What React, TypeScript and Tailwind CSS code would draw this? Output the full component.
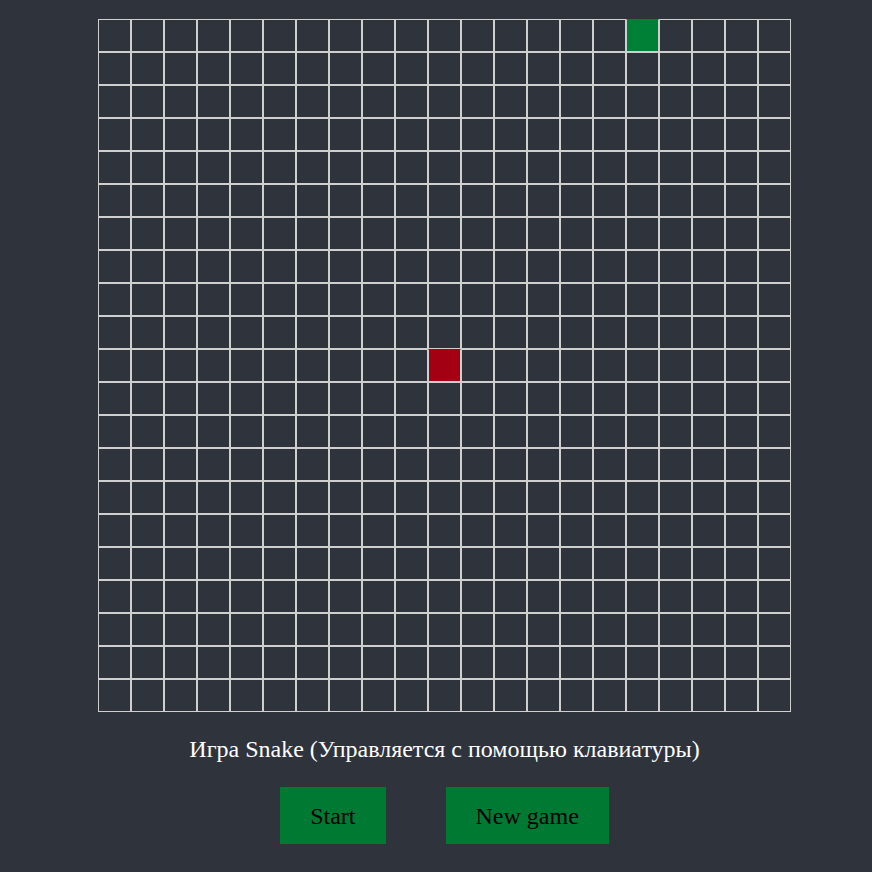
const SIZE = 21;
const snake = [{ x: 16, y: 0 }];
const food = { x: 10, y: 10 };

function Cell({ x, y }: { x: number; y: number }) {
  const isSnake = snake.some((s) => s.x === x && s.y === y);
  const isFood = food.x === x && food.y === y;

  let cls = "w-[33px] h-[33px] border border-[#cfcfcf]";
  if (isSnake) cls += " bg-[#007f36] border-t-[#007f36]";
  if (isFood) cls += " bg-[#a30014] border-t-[#a30014]";

  return <div className={cls} />;
}

export default function App() {
  const cells = [];
  for (let y = 0; y < SIZE; y++) {
    for (let x = 0; x < SIZE; x++) {
      cells.push(<Cell key={`${x}-${y}`} x={x} y={y} />);
    }
  }

  return (
    <div className="min-h-[872px] bg-[#2e333c] pt-[19px] font-['Liberation_Serif','Times_New_Roman',serif]">
      <div className="ml-[98px] w-[693px]">
        <div className="grid grid-cols-[repeat(21,33px)]">{cells}</div>

        <p className="mt-[23px] text-center text-[24px] leading-[28px] text-white">
          Игра Snake (Управляется с помощью клавиатуры)
        </p>

        <div className="mt-[24px] flex justify-center gap-[60px]">
          <button className="h-[57px] bg-[#007a33] px-[30px] text-[24px] text-black">
            Start
          </button>
          <button className="h-[57px] bg-[#007a33] px-[30px] text-[24px] text-black">
            New game
          </button>
        </div>
      </div>
    </div>
  );
}
